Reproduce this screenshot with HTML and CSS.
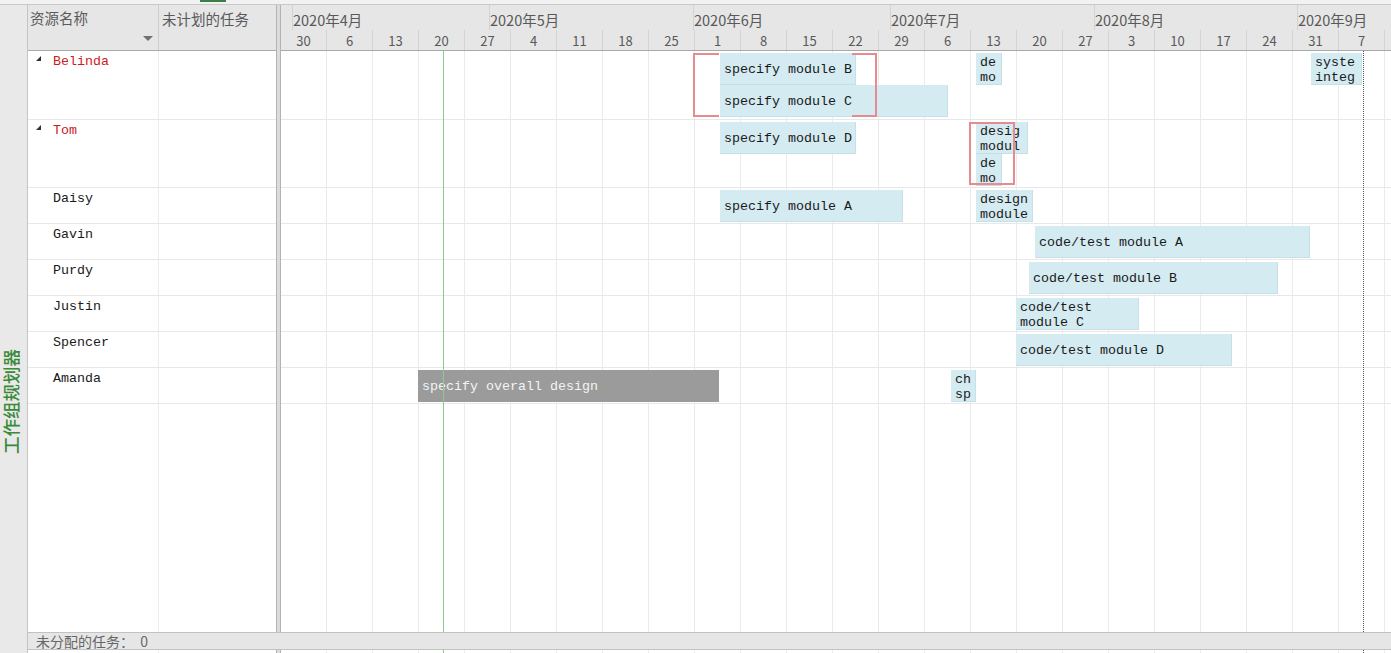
FILE: index.html
```html
<!DOCTYPE html>
<html lang="zh-CN">
<head>
<meta charset="utf-8">
<title>工作组规划器</title>
<link rel="stylesheet" href="styles.css">
</head>
<body>
<div class="app">
  <div class="topbar"><span class="tab-indicator"></span></div>
  <div class="workspace">
    <div class="sidebar"><span class="sidebar-title">工作组规划器</span></div>
    <div class="main">
      <div class="content">
        <div class="left-panel">
          <div class="panel-header">
            <div class="col-name"><span class="hdr-label">资源名称</span><span class="sort-arrow"></span></div>
            <div class="col-unplanned"><span class="hdr-label">未计划的任务</span></div>
          </div>
          <div class="panel-body">
            <div class="res-row row-belinda"><div class="res-name red"><span class="expander"></span>Belinda</div><div class="res-extra"></div></div>
            <div class="res-row row-tom"><div class="res-name red"><span class="expander"></span>Tom</div><div class="res-extra"></div></div>
            <div class="res-row row-single"><div class="res-name"><span class="expander blank"></span>Daisy</div><div class="res-extra"></div></div>
            <div class="res-row row-single"><div class="res-name"><span class="expander blank"></span>Gavin</div><div class="res-extra"></div></div>
            <div class="res-row row-single"><div class="res-name"><span class="expander blank"></span>Purdy</div><div class="res-extra"></div></div>
            <div class="res-row row-single"><div class="res-name"><span class="expander blank"></span>Justin</div><div class="res-extra"></div></div>
            <div class="res-row row-single"><div class="res-name"><span class="expander blank"></span>Spencer</div><div class="res-extra"></div></div>
            <div class="res-row row-single"><div class="res-name"><span class="expander blank"></span>Amanda</div><div class="res-extra"></div></div>
          </div>
        </div>
        <div class="splitter"></div>
        <div class="chart">
          <div class="timeline">
            <div class="months">
              <div class="month" style="width:11px"></div>
              <div class="month" style="width:197px">2020年4月</div>
              <div class="month" style="width:204px">2020年5月</div>
              <div class="month" style="width:197px">2020年6月</div>
              <div class="month" style="width:204px">2020年7月</div>
              <div class="month" style="width:203px">2020年8月</div>
              <div class="month month-last">2020年9月</div>
            </div>
            <div class="weeks">
              <div class="week">30</div><div class="week">6</div><div class="week">13</div><div class="week">20</div><div class="week">27</div>
              <div class="week">4</div><div class="week">11</div><div class="week">18</div><div class="week">25</div>
              <div class="week">1</div><div class="week">8</div><div class="week">15</div><div class="week">22</div><div class="week">29</div>
              <div class="week">6</div><div class="week">13</div><div class="week">20</div><div class="week">27</div>
              <div class="week">3</div><div class="week">10</div><div class="week">17</div><div class="week">24</div><div class="week">31</div>
              <div class="week">7</div>
            </div>
          </div>
          <div class="chart-body">
            <div class="gantt-row row-belinda">
              <div class="bar" style="left:439px;width:136px">specify module B</div>
              <div class="bar lower" style="left:439px;width:228px">specify module C</div>
              <div class="bar two-line" style="left:695px;width:26px">de<br>mo</div>
              <div class="bar two-line" style="left:1030px;width:51px">syste<br>integ</div>
              <div class="bracket bracket-open" style="left:412px;width:26px"></div>
              <div class="bracket bracket-close" style="left:571px;width:25px"></div>
            </div>
            <div class="gantt-row row-tom">
              <div class="bar" style="left:439px;width:136px">specify module D</div>
              <div class="bar two-line" style="left:695px;width:52px">desig<br>modul</div>
              <div class="bar two-line lower" style="left:695px;width:26px">de<br>mo</div>
              <div class="bracket bracket-box" style="left:688px;width:46px"></div>
            </div>
            <div class="gantt-row row-single">
              <div class="bar" style="left:439px;width:183px">specify module A</div>
              <div class="bar two-line" style="left:695px;width:57px">design<br>module</div>
            </div>
            <div class="gantt-row row-single">
              <div class="bar" style="left:754px;width:275px">code/test module A</div>
            </div>
            <div class="gantt-row row-single">
              <div class="bar" style="left:748px;width:249px">code/test module B</div>
            </div>
            <div class="gantt-row row-single">
              <div class="bar two-line" style="left:735px;width:123px">code/test<br>module C</div>
            </div>
            <div class="gantt-row row-single">
              <div class="bar" style="left:735px;width:216px">code/test module D</div>
            </div>
            <div class="gantt-row row-single">
              <div class="bar overall" style="left:137px;width:301px">specify overall design</div>
              <div class="bar two-line" style="left:670px;width:25px">ch<br>sp</div>
            </div>
            <div class="today-line"></div>
            <div class="deadline-line"></div>
          </div>
        </div>
      </div>
      <div class="footer">未分配的任务：  0</div>
      <div class="tail">
        <div class="tail-left"></div>
        <div class="splitter"></div>
        <div class="tail-chart">
          <div class="today-line"></div>
          <div class="deadline-line"></div>
        </div>
      </div>
    </div>
  </div>
</div>
</body>
</html>
```
FILE: styles.css
```css
* { box-sizing: border-box; margin: 0; padding: 0; }
html, body { width: 1391px; height: 653px; overflow: hidden; background: #ffffff; }
body {
  font-family: "Liberation Mono", "DejaVu Sans Mono", monospace;
  font-size: 13.33px;
  color: #1a1a1a;
}
.app { display: flex; flex-direction: column; height: 653px; }

.topbar {
  height: 5px;
  background: #f2f2f2;
  border-bottom: 1px solid #c9c9c9;
  display: flex;
  padding-left: 200px;
}
.tab-indicator { width: 26px; height: 2px; background: #3d7d46; }

.workspace { flex: 1; display: flex; min-height: 0; }

.sidebar {
  width: 28px;
  background: #e9e9e9;
  border-right: 1px solid #c4c4c4;
  display: flex;
  align-items: flex-start;
  padding-top: 344px;
  padding-left: 1px;
}
.sidebar-title {
  writing-mode: vertical-rl;
  text-orientation: sideways;
  transform: rotate(180deg);
  font-family: "Noto Sans CJK SC", sans-serif;
  font-size: 17.5px;
  font-weight: 500;
  line-height: 20px;
  color: #3a8a3a;
}

.main { flex: 1; display: flex; flex-direction: column; min-width: 0; }
.content { height: 627px; display: flex; }

/* left resource panel */
.left-panel { width: 248px; display: flex; flex-direction: column; }
.panel-header {
  height: 46px;
  background: #e6e6e6;
  border-bottom: 1px solid #a9a9a9;
  display: flex;
  font-family: "Noto Sans CJK SC", sans-serif;
  font-size: 14.5px;
  color: #5a5a5a;
}
.hdr-label { line-height: 20px; }
.col-name {
  width: 131px;
  border-right: 1px solid #cdcdcd;
  display: flex;
  flex-direction: column;
  padding: 3px 0 0 2px;
}
.sort-arrow {
  align-self: flex-end;
  margin: auto 5px 9px 0;
  width: 0; height: 0;
  border-left: 5px solid transparent;
  border-right: 5px solid transparent;
  border-top: 5px solid #707070;
}
.col-unplanned { flex: 1; padding: 3px 0 0 3px; }

.panel-body {
  flex: 1;
  background: linear-gradient(to right, transparent 130px, #ececec 130px, #ececec 131px, transparent 131px);
}
.res-row { display: flex; border-bottom: 1px solid #e8e8e8; }
.row-belinda { height: 69px; }
.row-tom { height: 68px; }
.row-single { height: 36px; }
.res-name {
  width: 131px;
  display: flex;
  align-items: flex-start;
  padding: 3px 0 0 8px;
  line-height: 16px;
  white-space: nowrap;
}
.res-name.red { color: #cc1b1b; }
.expander {
  width: 0; height: 0;
  margin: 2px 12px 0 0;
  border-left: 5px solid transparent;
  border-bottom: 5px solid #303030;
}
.expander.blank { border-bottom-color: transparent; }
.res-extra { flex: 1; }

.splitter {
  width: 5px;
  background: #dcdcdc;
  border-left: 1px solid #b3b3b3;
  border-right: 1px solid #b3b3b3;
}

/* chart */
.chart { flex: 1; display: flex; flex-direction: column; min-width: 0; overflow: hidden; }
.timeline {
  height: 46px;
  background: #e6e6e6;
  border-bottom: 1px solid #a9a9a9;
  font-family: "Noto Sans CJK SC", sans-serif;
  color: #595959;
}
.months { display: flex; height: 25px; font-size: 14.5px; white-space: nowrap; }
.month {
  flex: none;
  border-left: 1px solid #d3d3d3;
  padding-top: 5px;
  line-height: 20px;
  overflow: hidden;
}
.month:first-child { border-left: none; }
.month-last { flex: 1; }
.weeks { display: flex; height: 20px; font-size: 13px; }
.week {
  flex: none;
  width: 46px;
  border-right: 1px solid #d3d3d3;
  text-align: center;
  padding-top: 2px;
  line-height: 18px;
}

.chart-body {
  flex: 1;
  position: relative;
  background: repeating-linear-gradient(to right, transparent 0, transparent 45px, #ebebeb 45px, #ebebeb 46px);
}
.gantt-row { position: relative; border-bottom: 1px solid #e8e8e8; }

.bar {
  position: absolute;
  top: 2px;
  height: 32px;
  padding: 2px 0 0 4px;
  background: #d4ebf1;
  box-shadow: inset -1px -1px 0 #c6e0e7;
  line-height: 30px;
  white-space: nowrap;
  overflow: hidden;
  color: #1a1a1a;
}
.bar.lower { top: 34px; }
.bar.two-line { line-height: 15px; padding-top: 2px; white-space: normal; }
.bar.overall { background: #9b9b9b; box-shadow: none; color: #f4f4f4; }

.bracket {
  position: absolute;
  top: 2px;
  height: 64px;
  border: 2px solid #e68b8f;
}
.bracket-open { border-right: none; }
.bracket-close { border-left: none; }
.bracket-box { height: 63px; }

.today-line {
  position: absolute;
  top: 0; bottom: 0;
  left: 162px;
  width: 1px;
  background: #8ccb8c;
  z-index: 2;
}
.deadline-line {
  position: absolute;
  top: 0; bottom: 0;
  left: 1082px;
  width: 1px;
  border-left: 1px dotted #555555;
  z-index: 2;
}

/* footer */
.footer {
  height: 18px;
  background: #e6e6e6;
  border-top: 1px solid #c2c2c2;
  border-bottom: 1px solid #c2c2c2;
  font-family: "Noto Sans CJK SC", sans-serif;
  font-size: 14px;
  line-height: 16px;
  color: #666666;
  padding-left: 8px;
  white-space: pre;
}
.tail { flex: 1; display: flex; }
.tail-left {
  width: 248px;
  background: linear-gradient(to right, transparent 130px, #ececec 130px, #ececec 131px, transparent 131px);
}
.tail-chart {
  flex: 1;
  position: relative;
  background: repeating-linear-gradient(to right, transparent 0, transparent 45px, #ebebeb 45px, #ebebeb 46px);
}
```
